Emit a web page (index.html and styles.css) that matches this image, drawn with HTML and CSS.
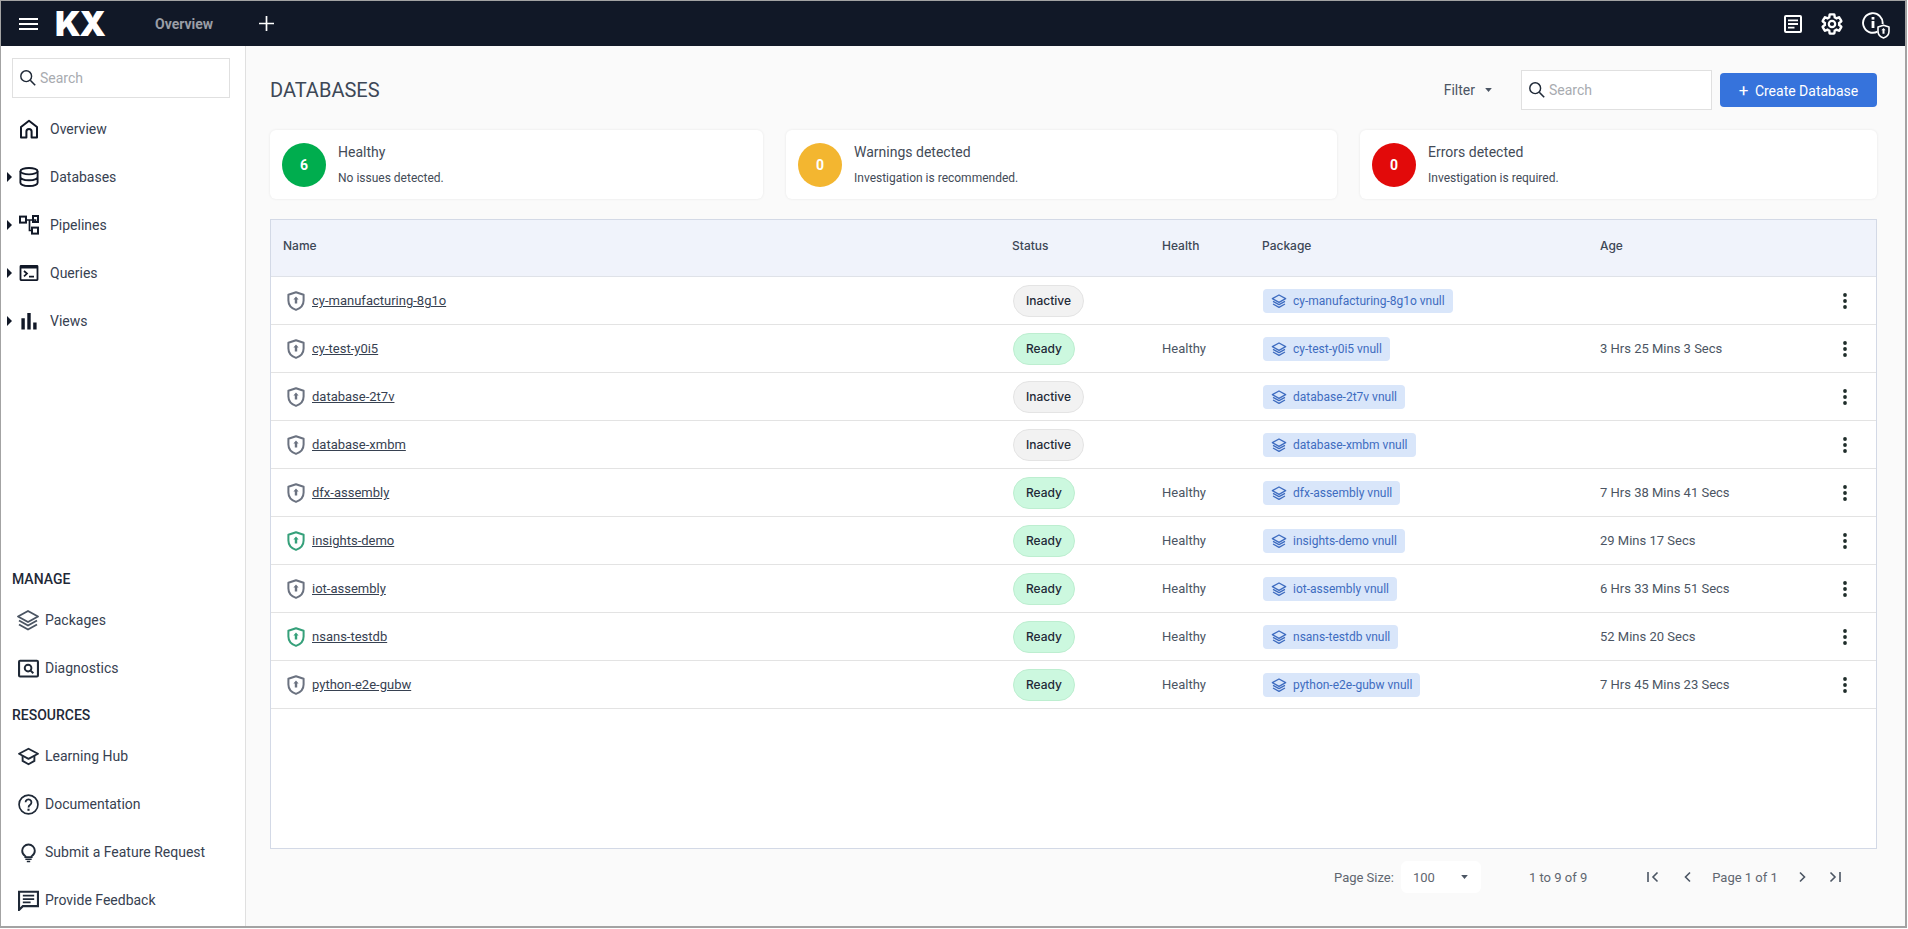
FILE: index.html
```html
<!DOCTYPE html>
<html>
<head>
    <title>Databases</title>
    <link rel="stylesheet" href="styles.css">
</head>
<body>
    <!-- Shared icons -->
    <svg class="sprite" xmlns="http://www.w3.org/2000/svg">
        <symbol id="i-search" viewBox="0 0 20 20"><circle cx="8" cy="8" r="6" fill="none" stroke="currentColor" stroke-width="1.6"/><path d="M12.5 12.5L18 18" stroke="currentColor" stroke-width="1.8" fill="none"/></symbol>
        <symbol id="i-shield" viewBox="0 0 18 20"><path d="M9 1.2L16.6 3.8V9.5C16.6 14 13.6 17.3 9 18.9C4.4 17.3 1.4 14 1.4 9.5V3.8Z" fill="none" stroke="currentColor" stroke-width="2" stroke-linejoin="round"/><path d="M9 5.4L11.6 8.4H10.2V12.6H7.8V8.4H6.4Z" fill="currentColor"/></symbol>
        <symbol id="i-layers" viewBox="0 0 24 24"><path d="M12 3L22 8.5L12 14L2 8.5Z" fill="none" stroke="currentColor" stroke-width="1.9" stroke-linejoin="round"/><path d="M3 12.5L12 17.5L21 12.5M3 16.5L12 21.5L21 16.5" fill="none" stroke="currentColor" stroke-width="1.9" stroke-linejoin="round"/></symbol>
        <symbol id="i-caret" viewBox="0 0 10 6"><path d="M0 0H10L5 6Z" fill="currentColor"/></symbol>
        <symbol id="i-kebab" viewBox="0 0 4 16"><circle cx="2" cy="2" r="1.9"/><circle cx="2" cy="8" r="1.9"/><circle cx="2" cy="14" r="1.9"/></symbol>
    </svg>

    <div class="window">
        <!-- Top bar -->
        <header class="topbar">
            <svg class="burger" viewBox="0 0 19 12"><path d="M0 1H19M0 6H19M0 11H19" stroke="#fff" stroke-width="1.8"/></svg>
            <span class="logo">KX</span>
            <span class="topbar-title">Overview</span>
            <svg class="add-tab" viewBox="0 0 15 15"><path d="M7.5 0V15M0 7.5H15" stroke="#fff" stroke-width="1.7"/></svg>
            <div class="topbar-tools">
                <svg class="tool notes" viewBox="0 0 18 18"><rect x="1" y="1" width="16" height="16" rx="1" fill="none" stroke="#fff" stroke-width="2"/><path d="M4 5.4H14M4 9H14M4 12.6H10.5" stroke="#fff" stroke-width="1.9"/></svg>
                <svg class="tool gear" viewBox="0 0 24 24"><path fill="none" stroke="#fff" stroke-width="2.4" d="M19.14 12.94c.04-.3.06-.61.06-.94 0-.32-.02-.64-.07-.94l2.03-1.58c.18-.14.23-.41.12-.61l-1.92-3.32c-.12-.22-.37-.29-.59-.22l-2.39.96c-.5-.38-1.03-.7-1.62-.94l-.36-2.54c-.04-.24-.24-.41-.48-.41h-3.84c-.24 0-.43.17-.47.41l-.36 2.54c-.59.24-1.13.57-1.62.94l-2.39-.96c-.22-.08-.47 0-.59.22L2.74 8.87c-.12.21-.08.47.12.61l2.03 1.58c-.05.3-.09.63-.09.94s.02.64.07.94l-2.03 1.58c-.18.14-.23.41-.12.61l1.92 3.32c.12.22.37.29.59.22l2.39-.96c.5.38 1.03.7 1.62.94l.36 2.54c.05.24.24.41.48.41h3.84c.24 0 .44-.17.47-.41l.36-2.54c.59-.24 1.13-.56 1.62-.94l2.39.96c.22.08.47 0 .59-.22l1.92-3.32c.12-.22.07-.47-.12-.61l-2.01-1.58z"/><circle cx="12" cy="12" r="3.2" fill="none" stroke="#fff" stroke-width="2.2"/></svg>
                <div class="info-tool">
                    <svg class="tool info" viewBox="0 0 22 22"><path d="M15.5 19.6A9.8 9.8 0 1 1 20.6 12" fill="none" stroke="#fff" stroke-width="1.9"/><rect x="9.6" y="9" width="2.8" height="7" fill="#fff"/><rect x="9.6" y="5" width="2.8" height="2.6" fill="#fff"/></svg>
                    <svg class="info-badge" viewBox="0 0 18 20"><path d="M9 1.2L16.6 3.8V9.5C16.6 14 13.6 17.3 9 18.9C4.4 17.3 1.4 14 1.4 9.5V3.8Z" fill="#111827" stroke="#fff" stroke-width="2.2" stroke-linejoin="round"/><path d="M9 5L12 8.4H10.4V13H7.6V8.4H6Z" fill="#fff"/></svg>
                </div>
            </div>
        </header>

        <div class="layout">
            <!-- Left navigation -->
            <aside class="sidebar">
                <div class="search side-search">
                    <svg class="search-icon"><use href="#i-search"/></svg>
                    <span>Search</span>
                </div>
                <nav class="nav">
                    <a class="nav-item">
                        <svg class="nav-icon" viewBox="0 0 20 20"><path d="M2 18.6V8L10 1.8L18 8V18.6H12.6V12.5A2.6 2.6 0 0 0 7.4 12.5V18.6Z" fill="none" stroke="currentColor" stroke-width="2" stroke-linejoin="round"/></svg>
                        Overview
                    </a>
                    <a class="nav-item has-children">
                        <svg class="nav-icon" viewBox="0 0 20 20"><ellipse cx="10" cy="4.2" rx="8.6" ry="3.2" fill="none" stroke="currentColor" stroke-width="1.9"/><path d="M1.4 4.2V15.8C1.4 17.6 5.2 19 10 19S18.6 17.6 18.6 15.8V4.2M1.4 10C1.4 11.8 5.2 13.2 10 13.2S18.6 11.8 18.6 10" fill="none" stroke="currentColor" stroke-width="1.9"/></svg>
                        Databases
                    </a>
                    <a class="nav-item has-children">
                        <svg class="nav-icon" viewBox="0 0 20 20"><path d="M7 5H16.5V8M10.5 5V15.5H13" fill="none" stroke="currentColor" stroke-width="1.7"/><rect x="1" y="1.6" width="6" height="6" fill="none" stroke="currentColor" stroke-width="2"/><rect x="14" y="1" width="5" height="6" fill="none" stroke="currentColor" stroke-width="2"/><rect x="13" y="12.6" width="6" height="6" fill="none" stroke="currentColor" stroke-width="2"/></svg>
                        Pipelines
                    </a>
                    <a class="nav-item has-children">
                        <svg class="nav-icon" viewBox="0 0 20 20"><path fill-rule="evenodd" d="M2 2H18A1.4 1.4 0 0 1 19.4 3.4V16.6A1.4 1.4 0 0 1 18 18H2A1.4 1.4 0 0 1 .6 16.6V3.4A1.4 1.4 0 0 1 2 2ZM2.4 5.6V16.2H17.6V5.6Z" fill="currentColor"/><path d="M5 8L8 10.6L5 13.4M10 13.6H15" fill="none" stroke="currentColor" stroke-width="1.7"/></svg>
                        Queries
                    </a>
                    <a class="nav-item has-children">
                        <svg class="nav-icon" viewBox="0 0 20 20"><path d="M2.4 7.2H5.8V18.6H2.4ZM8.3 2H11.7V18.6H8.3ZM14.2 11.4H17.6V18.6H14.2Z" fill="currentColor"/></svg>
                        Views
                    </a>
                </nav>
                <div class="side-bottom">
                    <h4 class="side-heading">MANAGE</h4>
                    <a class="nav-item sub">
                        <svg class="sub-icon layers"><use href="#i-layers"/></svg>
                        Packages
                    </a>
                    <a class="nav-item sub">
                        <svg class="sub-icon" viewBox="0 0 20 20"><rect x="1" y="2.6" width="18" height="15" rx="1" fill="none" stroke="currentColor" stroke-width="2"/><circle cx="9.6" cy="9.6" r="3.2" fill="none" stroke="currentColor" stroke-width="1.8"/><path d="M12 12L14.6 14.6" stroke="currentColor" stroke-width="1.9"/></svg>
                        Diagnostics
                    </a>
                    <h4 class="side-heading second">RESOURCES</h4>
                    <a class="nav-item sub">
                        <svg class="sub-icon" viewBox="0 0 20 20"><path d="M10 2.6L19 7.4L10 12.2L1 7.4Z" fill="none" stroke="currentColor" stroke-width="1.8" stroke-linejoin="round"/><path d="M4.4 9.4V14.2L10 17.4L15.6 14.2V9.4" fill="none" stroke="currentColor" stroke-width="1.8"/></svg>
                        Learning Hub
                    </a>
                    <a class="nav-item sub">
                        <svg class="sub-icon" viewBox="0 0 20 20"><circle cx="10" cy="10" r="9" fill="none" stroke="currentColor" stroke-width="1.6"/><path d="M7.2 7.8A2.8 2.8 0 1 1 11.6 10.2C10.6 10.9 10 11.4 10 12.8" fill="none" stroke="currentColor" stroke-width="1.7"/><rect x="9" y="14" width="2" height="2" fill="currentColor"/></svg>
                        Documentation
                    </a>
                    <a class="nav-item sub">
                        <svg class="sub-icon" viewBox="0 0 20 20"><path d="M7 13.6C5.4 12.6 4 11 4 8.4A6 6 0 0 1 16 8.4C16 11 14.6 12.6 13 13.6V14.4H7Z" fill="none" stroke="currentColor" stroke-width="1.8"/><path d="M7 16.4H13M8.4 18.6H11.6" stroke="currentColor" stroke-width="1.6"/></svg>
                        Submit a Feature Request
                    </a>
                    <a class="nav-item sub">
                        <svg class="sub-icon" viewBox="0 0 20 20"><path d="M1 1.6H19V15.4H4.6L1 19Z" fill="none" stroke="currentColor" stroke-width="2" stroke-linejoin="miter"/><path d="M4.6 5.4H15.4M4.6 8.6H15.4M4.6 11.8H12" stroke="currentColor" stroke-width="1.7"/></svg>
                        Provide Feedback
                    </a>
                </div>
            </aside>

            <!-- Main content -->
            <main class="main">
                <div class="page-head">
                    <h1 class="page-title">DATABASES</h1>
                    <div class="page-actions">
                        <span class="filter">Filter <svg class="caret"><use href="#i-caret"/></svg></span>
                        <div class="search head-search">
                            <svg class="search-icon"><use href="#i-search"/></svg>
                            <span>Search</span>
                        </div>
                        <button class="btn-primary"><span class="btn-plus">+</span> Create Database</button>
                    </div>
                </div>

                <div class="summary">
                    <div class="card">
                        <div class="count green">6</div>
                        <div>
                            <div class="card-title">Healthy</div>
                            <div class="card-text">No issues detected.</div>
                        </div>
                    </div>
                    <div class="card">
                        <div class="count amber">0</div>
                        <div>
                            <div class="card-title">Warnings detected</div>
                            <div class="card-text">Investigation is recommended.</div>
                        </div>
                    </div>
                    <div class="card">
                        <div class="count red">0</div>
                        <div>
                            <div class="card-title">Errors detected</div>
                            <div class="card-text">Investigation is required.</div>
                        </div>
                    </div>
                </div>

                <div class="grid-box">
                    <table class="grid">
                        <thead>
                            <tr>
                                <th class="col-name">Name</th>
                                <th class="col-status">Status</th>
                                <th class="col-health">Health</th>
                                <th class="col-package">Package</th>
                                <th class="col-age">Age</th>
                                <th></th>
                            </tr>
                        </thead>
                        <tbody>
                            <tr>
                                <td><div class="name-cell"><svg class="shield"><use href="#i-shield"/></svg><a class="db-link">cy-manufacturing-8g1o</a></div></td>
                                <td><span class="chip inactive">Inactive</span></td>
                                <td></td>
                                <td><span class="pkg"><svg class="pkg-icon"><use href="#i-layers"/></svg>cy-manufacturing-8g1o vnull</span></td>
                                <td></td>
                                <td class="cell-menu"><svg class="kebab"><use href="#i-kebab"/></svg></td>
                            </tr>
                            <tr>
                                <td><div class="name-cell"><svg class="shield"><use href="#i-shield"/></svg><a class="db-link">cy-test-y0i5</a></div></td>
                                <td><span class="chip ready">Ready</span></td>
                                <td>Healthy</td>
                                <td><span class="pkg"><svg class="pkg-icon"><use href="#i-layers"/></svg>cy-test-y0i5 vnull</span></td>
                                <td>3 Hrs 25 Mins 3 Secs</td>
                                <td class="cell-menu"><svg class="kebab"><use href="#i-kebab"/></svg></td>
                            </tr>
                            <tr>
                                <td><div class="name-cell"><svg class="shield"><use href="#i-shield"/></svg><a class="db-link">database-2t7v</a></div></td>
                                <td><span class="chip inactive">Inactive</span></td>
                                <td></td>
                                <td><span class="pkg"><svg class="pkg-icon"><use href="#i-layers"/></svg>database-2t7v vnull</span></td>
                                <td></td>
                                <td class="cell-menu"><svg class="kebab"><use href="#i-kebab"/></svg></td>
                            </tr>
                            <tr>
                                <td><div class="name-cell"><svg class="shield"><use href="#i-shield"/></svg><a class="db-link">database-xmbm</a></div></td>
                                <td><span class="chip inactive">Inactive</span></td>
                                <td></td>
                                <td><span class="pkg"><svg class="pkg-icon"><use href="#i-layers"/></svg>database-xmbm vnull</span></td>
                                <td></td>
                                <td class="cell-menu"><svg class="kebab"><use href="#i-kebab"/></svg></td>
                            </tr>
                            <tr>
                                <td><div class="name-cell"><svg class="shield"><use href="#i-shield"/></svg><a class="db-link">dfx-assembly</a></div></td>
                                <td><span class="chip ready">Ready</span></td>
                                <td>Healthy</td>
                                <td><span class="pkg"><svg class="pkg-icon"><use href="#i-layers"/></svg>dfx-assembly vnull</span></td>
                                <td>7 Hrs 38 Mins 41 Secs</td>
                                <td class="cell-menu"><svg class="kebab"><use href="#i-kebab"/></svg></td>
                            </tr>
                            <tr>
                                <td><div class="name-cell"><svg class="shield on"><use href="#i-shield"/></svg><a class="db-link">insights-demo</a></div></td>
                                <td><span class="chip ready">Ready</span></td>
                                <td>Healthy</td>
                                <td><span class="pkg"><svg class="pkg-icon"><use href="#i-layers"/></svg>insights-demo vnull</span></td>
                                <td>29 Mins 17 Secs</td>
                                <td class="cell-menu"><svg class="kebab"><use href="#i-kebab"/></svg></td>
                            </tr>
                            <tr>
                                <td><div class="name-cell"><svg class="shield"><use href="#i-shield"/></svg><a class="db-link">iot-assembly</a></div></td>
                                <td><span class="chip ready">Ready</span></td>
                                <td>Healthy</td>
                                <td><span class="pkg"><svg class="pkg-icon"><use href="#i-layers"/></svg>iot-assembly vnull</span></td>
                                <td>6 Hrs 33 Mins 51 Secs</td>
                                <td class="cell-menu"><svg class="kebab"><use href="#i-kebab"/></svg></td>
                            </tr>
                            <tr>
                                <td><div class="name-cell"><svg class="shield on"><use href="#i-shield"/></svg><a class="db-link">nsans-testdb</a></div></td>
                                <td><span class="chip ready">Ready</span></td>
                                <td>Healthy</td>
                                <td><span class="pkg"><svg class="pkg-icon"><use href="#i-layers"/></svg>nsans-testdb vnull</span></td>
                                <td>52 Mins 20 Secs</td>
                                <td class="cell-menu"><svg class="kebab"><use href="#i-kebab"/></svg></td>
                            </tr>
                            <tr>
                                <td><div class="name-cell"><svg class="shield"><use href="#i-shield"/></svg><a class="db-link">python-e2e-gubw</a></div></td>
                                <td><span class="chip ready">Ready</span></td>
                                <td>Healthy</td>
                                <td><span class="pkg"><svg class="pkg-icon"><use href="#i-layers"/></svg>python-e2e-gubw vnull</span></td>
                                <td>7 Hrs 45 Mins 23 Secs</td>
                                <td class="cell-menu"><svg class="kebab"><use href="#i-kebab"/></svg></td>
                            </tr>
                        </tbody>
                    </table>
                </div>

                <!-- Paging -->
                <div class="paging">
                    <span>Page Size:</span>
                    <div class="page-select"><span>100</span><svg class="caret dark"><use href="#i-caret"/></svg></div>
                    <span class="page-count">1 to 9 of 9</span>
                    <svg class="page-btn first" viewBox="0 0 12 12"><path d="M1 1V11" stroke="currentColor" stroke-width="1.6"/><path d="M10.5 1.5L6 6L10.5 10.5" fill="none" stroke="currentColor" stroke-width="1.6"/></svg>
                    <svg class="page-btn prev" viewBox="0 0 7 12"><path d="M6 1.5L1.5 6L6 10.5" fill="none" stroke="currentColor" stroke-width="1.6"/></svg>
                    <span class="page-label">Page 1 of 1</span>
                    <svg class="page-btn next" viewBox="0 0 7 12"><path d="M1 1.5L5.5 6L1 10.5" fill="none" stroke="currentColor" stroke-width="1.6"/></svg>
                    <svg class="page-btn last" viewBox="0 0 12 12"><path d="M1.5 1.5L6 6L1.5 10.5" fill="none" stroke="currentColor" stroke-width="1.6"/><path d="M11 1V11" stroke="currentColor" stroke-width="1.6"/></svg>
                </div>
            </main>
        </div>
    </div>
</body>
</html>
```

FILE: styles.css
```css
/* Page frame */
body {
    margin: 0;
    background: #fff;
    font-family: "Roboto", "Liberation Sans", sans-serif;
    font-size: 13px;
    color: #1f2937;
}

.sprite {
    display: none;
}

.window {
    box-sizing: border-box;
    width: 1907px;
    height: 928px;
    border: 1px solid #a3a3a3;
    border-right-width: 2px;
    border-bottom-width: 2px;
    display: flex;
    flex-direction: column;
    overflow: hidden;
}

/* Top bar */
.topbar {
    flex: none;
    height: 45px;
    background: #111827;
    display: flex;
    align-items: center;
    padding-right: 15px;
}

.burger {
    width: 19px;
    height: 12px;
    margin-left: 18px;
}

.logo {
    margin-left: 17px;
    width: 49px;
    font-family: "Inter", sans-serif;
    font-size: 34px;
    font-weight: 900;
    line-height: 45px;
    letter-spacing: -1.5px;
    color: #fff;
}

.topbar-title {
    margin-left: 51px;
    font-size: 14px;
    font-weight: 700;
    color: #9a9da5;
}

.add-tab {
    width: 15px;
    height: 15px;
    margin-left: 46px;
}

.topbar-tools {
    margin-left: auto;
    display: flex;
    align-items: center;
    gap: 18px;
}

.tool {
    display: block;
}

.notes {
    width: 18px;
    height: 18px;
}

.gear {
    width: 24px;
    height: 24px;
}

.info-tool {
    position: relative;
    width: 28px;
    height: 26px;
}

.info {
    width: 22px;
    height: 22px;
    margin-top: 1px;
}

.info-badge {
    position: absolute;
    right: 0;
    bottom: -2px;
    width: 13px;
    height: 15px;
}

.layout {
    flex: 1;
    min-height: 0;
    display: flex;
}

/* Sidebar */
.sidebar {
    box-sizing: border-box;
    flex: none;
    width: 245px;
    background: #fff;
    border-right: 1px solid #e0e0e0;
    display: flex;
    flex-direction: column;
    padding-top: 12px;
}

.search {
    box-sizing: border-box;
    display: flex;
    align-items: center;
    background: #fff;
    border: 1px solid #e0e0e0;
    color: #a8abb0;
    font-size: 14px;
}

.search-icon {
    width: 18px;
    height: 18px;
    margin-left: 6px;
    margin-right: 3px;
    color: #1f2937;
}

.side-search {
    width: 218px;
    height: 40px;
    margin-left: 11px;
}

.nav {
    margin-top: 7px;
}

.nav-item {
    position: relative;
    display: flex;
    align-items: center;
    height: 48px;
    padding-left: 18px;
    font-size: 14px;
    color: #374151;
}

.nav-icon {
    flex: none;
    width: 20px;
    height: 20px;
    margin-right: 11px;
    color: #111827;
}

.has-children::before {
    content: "";
    position: absolute;
    left: 6px;
    top: 19px;
    border-left: 5px solid #111827;
    border-top: 5px solid transparent;
    border-bottom: 5px solid transparent;
}

.side-bottom {
    margin-top: auto;
    padding-bottom: 2px;
}

.side-heading {
    margin: 0 0 5px 11px;
    height: 24px;
    line-height: 24px;
    font-size: 14px;
    font-weight: 500;
    color: #1f2937;
}

.side-heading.second {
    margin-top: 11px;
}

.nav-item.sub {
    padding-left: 17px;
}

.sub-icon {
    flex: none;
    width: 21px;
    height: 21px;
    margin-right: 6px;
    color: #1f2937;
}

.sub-icon.layers {
    width: 24px;
    height: 24px;
    margin-left: -2px;
    margin-right: 5px;
    color: #4b5563;
}

/* Main area */
.main {
    flex: 1;
    min-width: 0;
    background: #fafafa;
    padding: 24px 28px 0 24px;
}

.page-head {
    height: 40px;
    display: flex;
    align-items: center;
    justify-content: space-between;
}

.page-title {
    margin: 0;
    font-size: 20px;
    font-weight: 400;
    color: #3d4756;
}

.page-actions {
    display: flex;
    align-items: center;
}

.filter {
    display: flex;
    align-items: center;
    font-size: 14px;
    color: #4b5563;
}

.caret {
    width: 7px;
    height: 4px;
    margin-left: 10px;
    color: #4b5563;
}

.head-search {
    width: 191px;
    height: 40px;
    margin-left: 29px;
}

.btn-primary {
    width: 157px;
    height: 34px;
    margin-left: 8px;
    border: 0;
    border-radius: 4px;
    background: #3673dc;
    color: #fff;
    font-family: inherit;
    font-size: 14px;
    font-weight: 400;
    padding: 0;
}

.btn-plus {
    font-size: 17px;
    margin-right: 3px;
}

/* Summary cards */
.summary {
    display: grid;
    grid-template-columns: 493px 551px 1fr;
    gap: 23px;
    margin-top: 20px;
}

.card {
    box-sizing: border-box;
    height: 69px;
    background: #fff;
    border-radius: 6px;
    box-shadow: 0 0 3px rgba(0, 0, 0, 0.08);
    display: flex;
    align-items: center;
    padding-left: 12px;
    gap: 12px;
}

.count {
    width: 44px;
    height: 44px;
    border-radius: 50%;
    display: flex;
    align-items: center;
    justify-content: center;
    color: #fff;
    font-size: 14px;
    font-weight: 700;
}

.green { background: #00ad4e; }
.amber { background: #f3b630; }
.red { background: #e20a0a; }

.card-title {
    font-size: 14px;
    line-height: 20px;
    color: #434b57;
}

.card-text {
    margin-top: 6px;
    font-size: 12px;
    line-height: 20px;
    color: #434b57;
}

/* Table */
.grid-box {
    box-sizing: border-box;
    height: 630px;
    margin-top: 20px;
    border: 1px solid #d3d9e6;
    background: #fff;
}

.grid {
    width: 100%;
    table-layout: fixed;
    border-collapse: separate;
    border-spacing: 0;
}

.grid th {
    box-sizing: border-box;
    height: 57px;
    padding: 0 12px 5px;
    background: #f0f3fb;
    border-bottom: 1px solid #dfe2e8;
    text-align: left;
    font-family: "Inter", sans-serif;
    font-size: 12px;
    font-weight: 500;
    color: #3d4756;
}

.col-name { width: 729px; }
.col-status { width: 150px; }
.col-health { width: 100px; }
.col-package { width: 338px; }
.col-age { width: 232px; }

.grid td {
    box-sizing: border-box;
    height: 48px;
    padding: 0 12px;
    border-bottom: 1px solid #e3e3e3;
    font-size: 13px;
    color: #4b5563;
}

.name-cell {
    display: flex;
    align-items: center;
    padding-left: 4px;
}

.shield {
    width: 18px;
    height: 20px;
    margin-right: 7px;
    color: #6b7280;
}

.shield.on {
    color: #35a07a;
}

.db-link {
    color: #374151;
    text-decoration: underline;
}

.chip {
    box-sizing: border-box;
    display: inline-block;
    height: 32px;
    line-height: 30px;
    padding: 0 12px;
    margin-left: 1px;
    border-radius: 16px;
    border: 1px solid;
    font-family: "Inter", sans-serif;
    font-size: 12px;
    font-weight: 500;
    color: #1f2937;
}

.inactive {
    background: #f2f2f2;
    border-color: #e4e4e4;
}

.ready {
    background: #ccf8df;
    border-color: #bdeed0;
}

.pkg {
    display: inline-flex;
    align-items: center;
    height: 24px;
    margin-left: 1px;
    padding: 0 8px;
    border-radius: 4px;
    background: #d9e6fa;
    font-size: 12px;
    color: #3e6cc0;
}

.pkg-icon {
    width: 16px;
    height: 16px;
    margin-right: 6px;
}

.kebab {
    display: block;
    width: 4px;
    height: 16px;
    margin-left: 11px;
    fill: #1f2d2a;
}

/* Paging */
.paging {
    display: flex;
    align-items: center;
    height: 32px;
    margin-top: 12px;
    padding-left: 1064px;
    color: #5f6670;
    font-size: 13px;
}

.page-select {
    box-sizing: border-box;
    width: 80px;
    height: 32px;
    margin-left: 7px;
    padding: 0 13px 0 12px;
    display: flex;
    align-items: center;
    justify-content: space-between;
    background: #fff;
    border-radius: 6px;
}

.caret.dark {
    margin: 0;
}

.page-count {
    margin-left: 48px;
}

.page-btn {
    height: 12px;
    color: #4b5563;
}

.first {
    width: 12px;
    margin-left: 60px;
}

.prev {
    width: 7px;
    margin-left: 25px;
}

.page-label {
    margin-left: 21px;
}

.next {
    width: 7px;
    margin-left: 21px;
}

.last {
    width: 12px;
    margin-left: 23px;
}
```
